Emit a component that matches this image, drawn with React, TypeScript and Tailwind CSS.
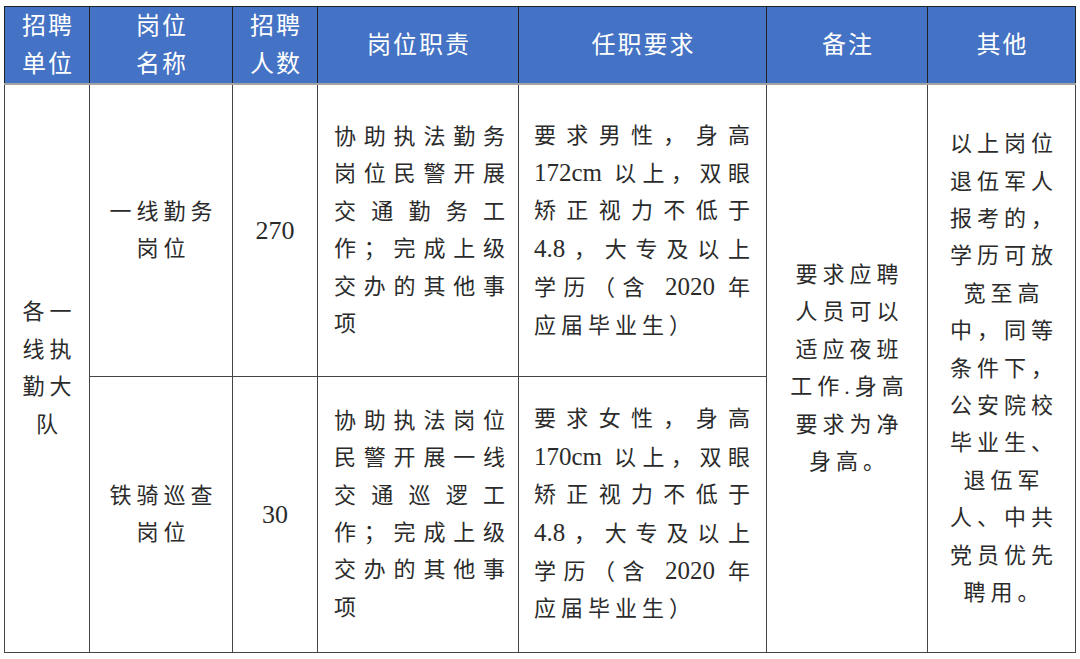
import React from "react";

const font = "font-['Liberation_Serif','Noto_Sans_CJK_SC',serif]";
const bodyText = "text-[22px] leading-[37.4px] text-[#2b2b2b]";

type Lines = string[];

// latin runs are set a bit larger, as in the scanned sheet
const withLatin = (s: string) =>
  s.split(/([0-9a-z.]+)/).map((part, i) =>
    /^[0-9a-z.]+$/.test(part) ? (
      <span key={i} className="text-[25px]">
        {part}
      </span>
    ) : (
      <React.Fragment key={i}>{part}</React.Fragment>
    )
  );

// each line laid out on its own; full lines are stretched edge to edge
const Justified: React.FC<{ lines: Lines }> = ({ lines }) => (
  <div className={bodyText}>
    {lines.map((l, i) => (
      <div
        key={i}
        className={
          i === lines.length - 1 ? "text-left tracking-[5px]" : "text-justify [text-align-last:justify]"
        }
      >
        {withLatin(l)}
      </div>
    ))}
  </div>
);

const Centered: React.FC<{ lines: Lines }> = ({ lines }) => (
  <div className={`${bodyText} text-center tracking-[5px] pl-[5px]`}>
    {lines.map((l, i) => (
      <div key={i}>{l}</div>
    ))}
  </div>
);

const headers: { lines: Lines }[] = [
  { lines: ["招聘", "单位"] },
  { lines: ["岗位", "名称"] },
  { lines: ["招聘", "人数"] },
  { lines: ["岗位职责"] },
  { lines: ["任职要求"] },
  { lines: ["备注"] },
  { lines: ["其他"] },
];

const colWidths = ["w-[85px]", "w-[143px]", "w-[85px]", "w-[201px]", "w-[248px]", "w-[161px]", "w-[148px]"];

const rows = [
  {
    name: ["一线勤务", "岗位"],
    count: "270",
    duty: ["协助执法勤务", "岗位民警开展", "交通勤务工", "作；完成上级", "交办的其他事", "项"],
    req: ["要求男性，身高", "172cm 以上，双眼", "矫正视力不低于", "4.8，大专及以上", "学历（含 2020 年", "应届毕业生）"],
  },
  {
    name: ["铁骑巡查", "岗位"],
    count: "30",
    duty: ["协助执法岗位", "民警开展一线", "交通巡逻工", "作；完成上级", "交办的其他事", "项"],
    req: ["要求女性，身高", "170cm 以上，双眼", "矫正视力不低于", "4.8，大专及以上", "学历（含 2020 年", "应届毕业生）"],
  },
];

const note = ["要求应聘", "人员可以", "适应夜班", "工作.身高", "要求为净", "身高。"];
const other = [
  "以上岗位",
  "退伍军人",
  "报考的，",
  "学历可放",
  "宽至高",
  "中，同等",
  "条件下，",
  "公安院校",
  "毕业生、",
  "退伍军",
  "人、中共",
  "党员优先",
  "聘用。",
];

const cell = "border border-[#444] align-middle p-0";

export default function App() {
  return (
    <div className={`w-[1080px] h-[659px] bg-white pt-[6px] pl-[4px] ${font}`}>
      <table className="table-fixed border-collapse w-[1071px]">
        <colgroup>
          {colWidths.map((w, i) => (
            <col key={i} className={w} />
          ))}
        </colgroup>
        <thead>
          <tr className="h-[77px] bg-[#4472c4]">
            {headers.map((h, i) => (
              <th
                key={i}
                className="border border-[#222] border-b-2 border-b-[#a3a3a3] align-middle font-normal text-white text-[24px] leading-[38px] tracking-[2px] pl-[2px]"
              >
                {h.lines.map((l, j) => (
                  <div key={j}>{l}</div>
                ))}
              </th>
            ))}
          </tr>
        </thead>
        <tbody>
          {rows.map((r, i) => (
            <tr key={i} className={i === 0 ? "h-[292px]" : "h-[276px]"}>
              {i === 0 && (
                <td rowSpan={2} className={cell}>
                  <Centered lines={["各一", "线执", "勤大", "队"]} />
                </td>
              )}
              <td className={cell}>
                <Centered lines={r.name} />
              </td>
              <td className={`${cell} text-center text-[26px] text-[#2b2b2b]`}>{r.count}</td>
              <td className={`${cell} pl-[16px] pr-[13px]`}>
                <Justified lines={r.duty} />
              </td>
              <td className={`${cell} pl-[15px] pr-[16px]`}>
                <Justified lines={r.req} />
              </td>
              {i === 0 && (
                <>
                  <td rowSpan={2} className={cell}>
                    <Centered lines={note} />
                  </td>
                  <td rowSpan={2} className={cell}>
                    <Centered lines={other} />
                  </td>
                </>
              )}
            </tr>
          ))}
        </tbody>
      </table>
    </div>
  );
}
